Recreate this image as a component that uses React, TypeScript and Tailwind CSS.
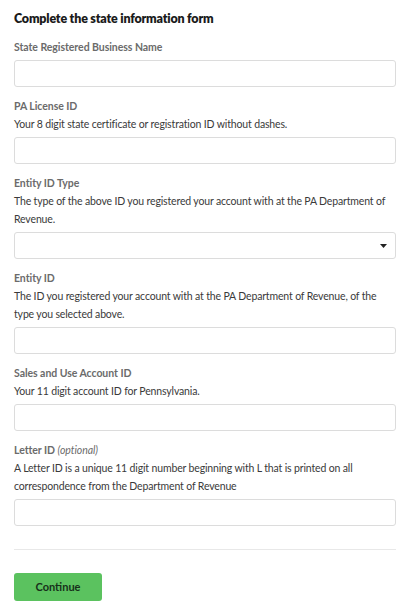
const font = { fontFamily: 'Lato, "Liberation Sans", sans-serif' }

function Label({ children }: { children: React.ReactNode }) {
  return <div className="text-[10.5px] font-bold leading-[18px] tracking-[-0.05px] text-[#6b6b6b]">{children}</div>
}

function Hint({ children }: { children: React.ReactNode }) {
  return <p className="text-[10.5px] leading-[18px] tracking-[-0.15px] text-[#3a3a3a]">{children}</p>
}

function Field({ label, hint, select }: { label: React.ReactNode; hint?: string; select?: boolean }) {
  return (
    <div className="flex flex-col">
      <Label>{label}</Label>
      {hint && <Hint>{hint}</Hint>}
      {select ? (
        <div className="mt-[4px] flex h-[27px] items-center justify-end rounded-[3px] border border-[#dcdcdc] bg-white pr-[8px]">
          <svg width="7" height="4" viewBox="0 0 7 4">
            <path d="M0 0h7L3.5 4z" fill="#222" />
          </svg>
        </div>
      ) : (
        <input className="mt-[4px] h-[27px] w-full rounded-[3px] border border-[#dcdcdc] bg-white px-2 text-[12px] outline-none" />
      )}
    </div>
  )
}

export default function App() {
  return (
    <div className="min-h-[611px] bg-white pl-[14px] pr-[16px] pt-[10px]" style={font}>
      <h1 className="text-[12.5px] font-extrabold leading-[18px] tracking-[-0.2px] text-[#1a1a1a]">
        Complete the state information form
      </h1>
      <div className="mt-[10px] flex flex-col gap-[10px]">
        <Field label="State Registered Business Name" />
        <Field label="PA License ID" hint="Your 8 digit state certificate or registration ID without dashes." />
        <Field
          label="Entity ID Type"
          hint="The type of the above ID you registered your account with at the PA Department of Revenue."
          select
        />
        <Field
          label="Entity ID"
          hint="The ID you registered your account with at the PA Department of Revenue, of the type you selected above."
        />
        <Field label="Sales and Use Account ID" hint="Your 11 digit account ID for Pennsylvania." />
        <Field
          label={
            <>
              Letter ID <span className="font-normal italic">(optional)</span>
            </>
          }
          hint="A Letter ID is a unique 11 digit number beginning with L that is printed on all correspondence from the Department of Revenue"
        />
      </div>
      <hr className="mt-[23px] border-[#e8e8e8]" />
      <button className="mt-[23px] h-[28px] w-[88px] rounded-[3px] bg-[#5bc25f] text-[11px] font-bold text-[#17301a]">
        Continue
      </button>
    </div>
  )
}
